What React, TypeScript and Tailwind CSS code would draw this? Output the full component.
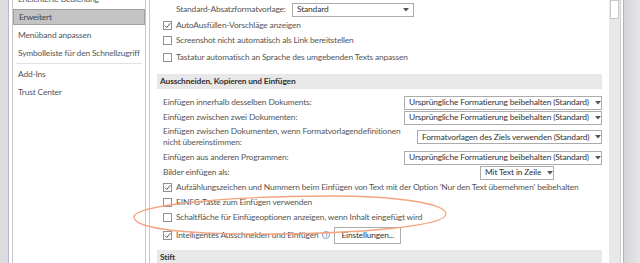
import type { ReactNode } from 'react';

function Check({ checked }: { checked?: boolean }) {
  return (
    <span className="w-[9px] h-[9px] border border-[#8f8f8f] bg-white flex items-center justify-center shrink-0">
      {checked && (
        <svg width="7" height="7" viewBox="0 0 7 7">
          <path d="M0.8 3.6 L2.7 5.5 L6.3 1.2" fill="none" stroke="#444" strokeWidth="0.9" />
        </svg>
      )}
    </span>
  );
}

function CheckRow({ checked, children, className = '' }: { checked?: boolean; children: ReactNode; className?: string }) {
  return (
    <div className={`flex items-center gap-[4px] pl-[13px] h-[15px] shrink-0 ${className}`}>
      <Check checked={checked} />
      <span className="whitespace-nowrap">{children}</span>
    </div>
  );
}

function Select({ value, className = '' }: { value: string; className?: string }) {
  return (
    <div className={`h-[14px] shrink-0 border border-[#acacac] bg-white flex items-center justify-between pl-[4px] pr-[4px] text-[#333] ${className}`}>
      <span className="whitespace-nowrap">{value}</span>
      <svg width="6" height="4" viewBox="0 0 6 4" className="ml-[6px] shrink-0">
        <path d="M0 0 H6 L3 3.5 Z" fill="#555" />
      </svg>
    </div>
  );
}

function SelectRow({ label, value, selectClass }: { label: ReactNode; value: string; selectClass: string }) {
  return (
    <div className="flex items-center justify-between pl-[13px] pr-[7px] h-[15px] shrink-0">
      <span className="whitespace-nowrap">{label}</span>
      <Select value={value} className={selectClass} />
    </div>
  );
}

function SectionHeader({ title }: { title: string }) {
  return (
    <div className="mx-[7px] h-[15px] shrink-0 bg-[#e8e8e8] flex items-center pl-[3px] font-bold text-[#333]">
      {title}
    </div>
  );
}

const navItems = [
  'Erleichterte Bedienung',
  'Erweitert',
  'Menüband anpassen',
  'Symbolleiste für den Schnellzugriff',
];

export default function App() {
  return (
    <div className="relative w-[640px] h-[263px] overflow-hidden bg-white flex font-['Lato',sans-serif] text-[8.4px] tracking-[-0.15px] text-[#555] leading-none">
      {/* left window edge */}
      <div className="w-[9px] shrink-0 bg-[#dcdce0] border-r border-[#bdb4d4]" />
      <div className="w-[3px] shrink-0" />

      {/* navigation */}
      <nav className="w-[134px] shrink-0 border-x border-[#c9c9c9] flex flex-col mt-[-9px]">
        {navItems.map((item) => (
          <div
            key={item}
            className={`h-[16px] mb-[2px] flex items-center px-[5px] whitespace-nowrap ${
              item === 'Erweitert' ? 'bg-[#c4c4c4] border border-[#a0a0a0] text-[#444] px-[4px]' : ''
            }`}
          >
            {item}
          </div>
        ))}
        <div className="mx-[3px] h-px bg-[#e2e2e2] mb-[2px]" />
        <div className="h-[16px] mb-[2px] flex items-center px-[5px]">Add-Ins</div>
        <div className="h-[16px] mb-[2px] flex items-center px-[5px]">Trust Center</div>
      </nav>
      <div className="w-[3px] shrink-0" />

      {/* main options pane */}
      <main className="flex-1 min-w-0 overflow-hidden border-l border-[#c9c9c9] flex">
        <div className="flex-1 min-w-0 flex flex-col pt-[2px]">
          <div className="flex items-center h-[15px] pl-[26px] shrink-0">
            <span className="whitespace-nowrap w-[116px] shrink-0">Standard-Absatzformatvorlage:</span>
            <Select value="Standard" className="w-[122px]" />
          </div>
          <CheckRow checked className="mt-[1px]">AutoAusfüllen-Vorschläge anzeigen</CheckRow>
          <CheckRow>Screenshot nicht automatisch als Link bereitstellen</CheckRow>
          <CheckRow className="mt-[2px]">Tastatur automatisch an Sprache des umgebenden Texts anpassen</CheckRow>
          <div className="h-[9px] shrink-0" />
          <SectionHeader title="Ausschneiden, Kopieren und Einfügen" />
          <div className="h-[6px] shrink-0" />
          <SelectRow label="Einfügen innerhalb desselben Dokuments:" value="Ursprüngliche Formatierung beibehalten (Standard)" selectClass="w-[198px]" />
          <SelectRow label="Einfügen zwischen zwei Dokumenten:" value="Ursprüngliche Formatierung beibehalten (Standard)" selectClass="w-[198px]" />
          <div className="flex items-center justify-between pl-[13px] pr-[7px] h-[24px] shrink-0">
            <span className="leading-[11px] whitespace-nowrap shrink-0">
              Einfügen zwischen Dokumenten, wenn Formatvorlagendefinitionen
              <br />
              nicht übereinstimmen:
            </span>
            <Select value="Formatvorlagen des Ziels verwenden (Standard)" className="w-[185px]" />
          </div>
          <div className="h-[1px] shrink-0" />
          <SelectRow label="Einfügen aus anderen Programmen:" value="Ursprüngliche Formatierung beibehalten (Standard)" selectClass="w-[198px]" />
          <div className="flex items-center pl-[13px] h-[15px] shrink-0">
            <span className="whitespace-nowrap w-[317px] shrink-0">Bilder einfügen als:</span>
            <Select value="Mit Text in Zeile" className="w-[74px]" />
          </div>
          <CheckRow checked>
            Aufzählungszeichen und Nummern beim Einfügen von Text mit der Option 'Nur den Text übernehmen' beibehalten
          </CheckRow>
          <CheckRow>EINFG-Taste zum Einfügen verwenden</CheckRow>
          <CheckRow>Schaltfläche für Einfügeoptionen anzeigen, wenn Inhalt eingefügt wird</CheckRow>
          <div className="flex items-center gap-[4px] pl-[13px] h-[18px] mt-[1px] shrink-0">
            <Check checked />
            <span className="whitespace-nowrap">Intelligentes Ausschneiden und Einfügen</span>
            <span className="w-[8px] h-[8px] rounded-full border border-[#7aa3da] text-[#6d9ad6] text-[6px] flex items-center justify-center font-bold shrink-0">i</span>
            <div className="h-[17px] px-[6px] border border-[#adadad] bg-white flex items-center text-[#333] shrink-0">
              Einstellungen...
            </div>
          </div>
          <div className="h-[6px] shrink-0" />
          <SectionHeader title="Stift" />
        </div>

        {/* scrollbar */}
        <div className="w-[12px] shrink-0 bg-[#e8e8e8] border-r border-[#d0d0d0] flex flex-col">
          <div className="h-[19px] bg-white border border-[#c8c8c8] mx-px" />
        </div>
        <div className="w-[2px] shrink-0 bg-white" />
      </main>

      {/* right window edge */}
      <div className="w-[17px] shrink-0 bg-gradient-to-r from-[#d6d6da] to-[#e6e6e9] border-l border-[#b9a9d6]" />

      {/* annotation ellipse */}
      <svg className="absolute inset-0 pointer-events-none" width="640" height="263" viewBox="0 0 640 263">
        <path
          d="M134 217 C134 205 230 196 330 196 C400 196 446 204 446 214 C446 226 360 234 260 234 C180 234 134 228 134 217 Z"
          fill="none"
          stroke="#f4a47e"
          strokeWidth="1.3"
        />
      </svg>
    </div>
  );
}
